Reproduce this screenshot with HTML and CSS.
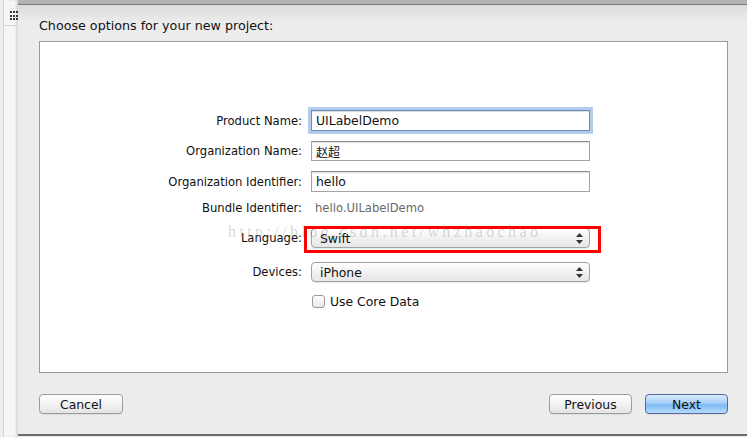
FILE: index.html
```html
<!DOCTYPE html>
<html lang="en">

<head>
  <meta charset="UTF-8">
  <meta name="viewport" content="width=device-width, initial-scale=1.0">
  <title>Choose options for your new project</title>
  <link rel="stylesheet" href="styles.css">
</head>

<body>
  <div class="window">
    <div class="sidebar">
      <div class="sidebar-top">
        <span class="grid-icon">
          <i></i><i></i><i></i><i></i><i></i><i></i><i></i><i></i><i></i>
        </span>
      </div>
    </div>

    <div class="sheet">
      <div class="topbar"></div>
      <div class="ghost">
        <span class="ghost-nav">&#9664;&nbsp;&nbsp;&#9654;</span>
        <span class="ghost-text">No Selection</span>
      </div>

      <h1 class="title">Choose options for your new project:</h1>

      <div class="panel">
        <div class="form">
          <div class="row r1">
            <label class="label">Product Name:</label>
            <div class="field focused">UILabelDemo</div>
          </div>
          <div class="row r2">
            <label class="label">Organization Name:</label>
            <div class="field cjk">赵超</div>
          </div>
          <div class="row r3">
            <label class="label">Organization Identifier:</label>
            <div class="field">hello</div>
          </div>
          <div class="row r4">
            <label class="label">Bundle Identifier:</label>
            <div class="value">hello.UILabelDemo</div>
          </div>
          <div class="row r5">
            <label class="label">Language:</label>
            <div class="popup highlighted">
              <span>Swift</span>
              <svg class="arrows" width="7" height="11" viewBox="0 0 7 11">
                <path d="M3.5 0 L7 4 L0 4 Z M3.5 11 L7 7 L0 7 Z" fill="#333"/>
              </svg>
            </div>
          </div>
          <div class="row r6">
            <label class="label">Devices:</label>
            <div class="popup">
              <span>iPhone</span>
              <svg class="arrows" width="7" height="11" viewBox="0 0 7 11">
                <path d="M3.5 0 L7 4 L0 4 Z M3.5 11 L7 7 L0 7 Z" fill="#333"/>
              </svg>
            </div>
          </div>
          <div class="row r7">
            <span class="label"></span>
            <div class="check">
              <span class="box"></span>
              <span>Use Core Data</span>
            </div>
          </div>
        </div>
        <div class="watermark">http://blog.csdn.net/whzhaochao</div>
      </div>

      <div class="buttons">
        <button class="btn cancel">Cancel</button>
        <div class="nav">
          <button class="btn previous">Previous</button>
          <button class="btn next">Next</button>
        </div>
      </div>
    </div>
  </div>
</body>

</html>
```

FILE: styles.css
```css
* {
  margin: 0;
  padding: 0;
  box-sizing: border-box;
}

body {
  width: 747px;
  height: 437px;
  overflow: hidden;
  background: #e8e8e8;
  font-family: 'DejaVu Sans', 'Noto Sans CJK SC', sans-serif;
  font-size: 11.6px;
  color: #111;
}

.window {
  display: flex;
  height: 437px;
}

/* xcode behind the sheet */
.sidebar {
  width: 18px;
  background: #f6f6f6;
  border-left: 3px solid #eeeeee;
  box-shadow: inset 1px 0 0 #cfd5de, inset -2px 0 2px rgba(0, 0, 0, 0.12);
}

.sidebar-top {
  height: 26px;
  border-bottom: 1px solid #d8d8d8;
  padding: 11px 0 0 7px;
}

.grid-icon {
  display: grid;
  grid-template-columns: repeat(3, 2px);
  column-gap: 1px;
  row-gap: 1.5px;
}

.grid-icon i {
  width: 2px;
  height: 2px;
  background: #333;
}

/* sheet */
.sheet {
  flex: 1;
  display: flex;
  flex-direction: column;
  padding: 0 19px 0 21px;
  background: linear-gradient(#d6d6d6, #ececec 22px);
  border-bottom: 2px solid #6e6e6e;
  height: 436px;
  position: relative;
}

.topbar {
  height: 5px;
  margin: 0 -19px 0 -21px;
  background: #b2b2b2;
  border-bottom: 1px solid #777;
}

.ghost {
  position: absolute;
  top: 7px;
  left: 24px;
  color: #e2e2e2;
  font-size: 11px;
  line-height: 11px;
  display: flex;
  gap: 20px;
}

.title {
  font-size: 12.7px;
  font-weight: normal;
  line-height: 12px;
  margin-top: 15px;
  position: relative;
}

.panel {
  margin-top: 9px;
  height: 332px;
  background: #fff;
  border: 1px solid #9a9a9a;
  position: relative;
}

.form {
  padding-top: 68px;
  display: flex;
  flex-direction: column;
}

.row {
  display: flex;
  align-items: center;
  gap: 9px;
}

.r1 { height: 21px; }
.r2 { height: 20px; margin-top: 10px; }
.r3 { height: 21px; margin-top: 10px; }
.r4 { height: 18px; margin-top: 7px; }
.r5 { height: 20px; margin-top: 11px; }
.r6 { height: 20px; margin-top: 14px; }
.r7 { height: 18px; margin-top: 10px; }

.label {
  width: 262px;
  text-align: right;
  flex-shrink: 0;
}

.field {
  width: 279px;
  height: 100%;
  border: 1px solid #a4a4a4;
  border-top-color: #8a8a8a;
  box-shadow: inset 0 1px 1px rgba(0, 0, 0, 0.12);
  padding: 0 4px;
  display: flex;
  align-items: center;
  font-size: 12.4px;
  background: #fff;
}

.field.cjk {
  font-size: 12px;
}

.field.focused {
  border-color: #6b8cc4;
  box-shadow: 0 0 0 3px rgba(120, 160, 220, 0.55), inset 0 1px 1px rgba(0, 0, 0, 0.15);
}

.value {
  color: #6a6a6a;
  padding-left: 4px;
}

.popup {
  width: 279px;
  height: 100%;
  border: 1px solid #a2a2a2;
  border-radius: 4px;
  background: linear-gradient(#ffffff, #f1f1f1 50%, #e6e6e6);
  box-shadow: 0 1px 0 rgba(0, 0, 0, 0.08);
  display: flex;
  align-items: center;
  justify-content: space-between;
  padding: 0 6px 0 8px;
  font-size: 12.4px;
  position: relative;
}

.popup.highlighted::after {
  content: '';
  position: absolute;
  left: -8px;
  top: -3px;
  right: -12px;
  bottom: -6px;
  border: 3px solid #ff0000;
}

.check {
  display: flex;
  align-items: center;
  gap: 5px;
  font-size: 12.4px;
}

.check .box {
  width: 13px;
  height: 13px;
  margin-left: 1px;
  border: 1px solid #9a9a9a;
  border-radius: 3px;
  background: linear-gradient(#ffffff, #e8e8e8);
}

.watermark {
  position: absolute;
  left: 188px;
  top: 181px;
  font-family: 'Liberation Serif', serif;
  font-size: 16px;
  letter-spacing: 3.4px;
  color: rgba(120, 120, 120, 0.3);
  pointer-events: none;
}

/* bottom buttons */
.buttons {
  display: flex;
  justify-content: space-between;
  margin-top: 21px;
}

.nav {
  display: flex;
  gap: 13px;
}

.btn {
  height: 20px;
  font-family: inherit;
  font-size: 12.4px;
  color: #111;
  border: 1px solid #9c9c9c;
  border-radius: 4px;
  background: linear-gradient(#ffffff, #f2f2f2 50%, #e4e4e4);
  box-shadow: 0 1px 0 rgba(0, 0, 0, 0.06);
}

.cancel {
  width: 84px;
}

.previous {
  width: 83px;
}

.next {
  width: 83px;
  border-color: #56679e;
  background: linear-gradient(#d8ebfd, #a6d0f8 45%, #7ebaf4 55%, #b7dcfc);
}
```
